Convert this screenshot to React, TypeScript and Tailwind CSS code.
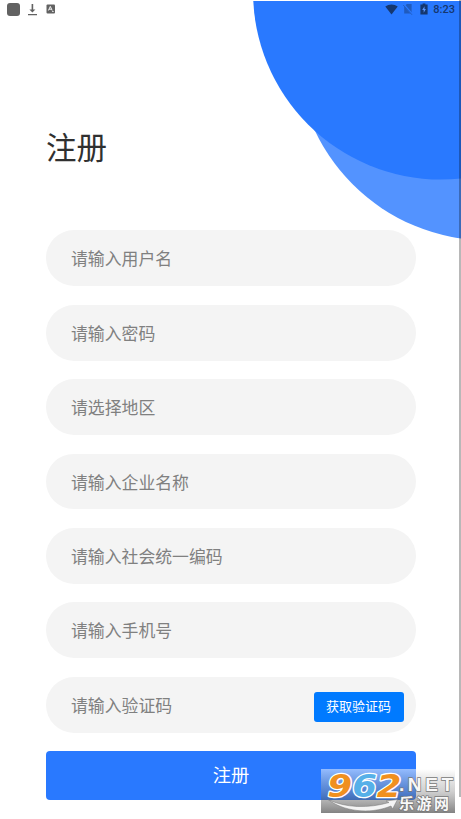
type FieldProps = {
  label: string;
  action?: string;
};

const FIELDS: FieldProps[] = [
  { label: '请输入用户名' },
  { label: '请输入密码' },
  { label: '请选择地区' },
  { label: '请输入企业名称' },
  { label: '请输入社会统一编码' },
  { label: '请输入手机号' },
  { label: '请输入验证码', action: '获取验证码' },
];

const StatusBar = () => (
  <div className="relative flex h-[18px] items-center justify-between pl-[7px] pr-[6px]">
    <div className="flex items-center text-[#626262]">
      <span className="h-[13px] w-[13px] rounded-[3px] bg-[#626262]" />
      <svg className="ml-[7px]" width="11" height="13" viewBox="0 0 11 13" fill="currentColor">
        <path d="M4.6 1h1.6v5.4h2.2L5.4 9.4 2.4 6.4h2.2zM1 11h9v1.3H1z" />
      </svg>
      <svg className="ml-[8px]" width="10" height="10" viewBox="0 0 10 10" fill="none">
        <rect x="0.5" y="0.5" width="8.5" height="9" rx="1" fill="#626262" />
        <path d="M2.4 6.5 4.3 2.4l1.9 4.1M3 5.2h2.6M6.2 7.5h1.4" stroke="#fff" strokeWidth="0.9" />
      </svg>
    </div>
    <div className="flex items-center text-[#15376f]">
      <svg width="13" height="11" viewBox="0 0 13 11" fill="currentColor">
        <path d="M0.3 2.6C3.8-.3 9.2-.3 12.7 2.6L6.5 10.6z" />
      </svg>
      <svg className="ml-[5px] opacity-45" width="10" height="12" viewBox="0 0 10 12">
        <path d="M3.8 1H8.6V10.6H1.2V3.8z" fill="currentColor" />
        <path d="M0.4 1 9.6 11.6" stroke="#2979ff" strokeWidth="1.8" />
        <path d="M0.2 2 9 11.8" stroke="currentColor" strokeWidth="0.9" />
      </svg>
      <svg className="ml-[7px]" width="8" height="12" viewBox="0 0 8 12">
        <path d="M2.6 0.5h2.8v1.1H7.6v9.9H0.4V1.6h2.2z" fill="currentColor" />
        <path d="M4.5 3.2 2.2 7h1.5v2.8L5.9 6H4.5z" fill="#5c97ff" />
      </svg>
      <span className="ml-[5px] pt-px font-['Roboto',sans-serif] text-[11px] font-medium leading-[18px]">
        8:23
      </span>
    </div>
  </div>
);

const Field = ({ label, action }: FieldProps) => (
  <div className="flex h-[55.8px] items-center justify-between rounded-full bg-[#f4f4f4] pl-[25px] pr-[12.5px]">
    <span className="pb-[0.8px] text-[16.85px] leading-[25px] text-[#808080]">{label}</span>
    {action && (
      <button className="mt-[4.6px] h-[30px] w-[90px] rounded-[3px] bg-[#007aff] pb-[2px] text-[13px] text-white">
        {action}
      </button>
    )}
  </div>
);

const Watermark = () => (
  <svg className="absolute left-[321px] top-[769px]" width="134" height="44" viewBox="0 0 134 44">
    <defs>
      <linearGradient id="plate" x1="0" y1="0" x2="0" y2="1">
        <stop offset="0" stopColor="#fff" stopOpacity="0.5" />
        <stop offset="0.5" stopColor="#909090" stopOpacity="0.42" />
        <stop offset="1" stopColor="#101010" stopOpacity="0.52" />
      </linearGradient>
    </defs>
    <rect width="134" height="44" fill="url(#plate)" />
    <path
      d="M7 30.5C24 39 48 39.5 68 33.5l-3-1.5 11.5-1.5-5 9.5-1.5-3C48 46 22 42 7 30.5z"
      fill="#f4f4f4"
      stroke="#777"
      strokeWidth="0.5"
    />
    <g
      fontFamily="DejaVu Sans, sans-serif"
      fontWeight="700"
      fontStyle="italic"
      fontSize="32.5"
      stroke="#fff"
      strokeWidth="2.6"
      paintOrder="stroke"
      strokeLinejoin="round"
    >
      <text x="6.5" y="27.5" textLength="74" lengthAdjust="spacingAndGlyphs">
        <tspan fill="#f0901f">9</tspan>
        <tspan fill="#56b0e8">6</tspan>
        <tspan fill="#f0901f">2</tspan>
      </text>
    </g>
    <g fill="#f8f8f8" stroke="#777" strokeWidth="1.4" paintOrder="stroke" fontWeight="700">
      <text x="78" y="22" fontFamily="Liberation Sans, sans-serif" fontSize="19" textLength="54">.NET</text>
      <text x="78" y="39.5" fontFamily="Noto Sans CJK SC, sans-serif" fontSize="15" textLength="50">乐游网</text>
    </g>
  </svg>
);

export default function App() {
  return (
    <div className="relative h-[819px] w-[461px] overflow-hidden bg-white font-['Noto_Sans_CJK_SC',sans-serif]">
      <svg className="absolute left-0 top-0" width="461" height="250" viewBox="0 0 461 250">
        <circle cx="488" cy="49" r="191.4" fill="#5393ff" />
        <circle cx="441" cy="-8.5" r="188" fill="#2979ff" />
        <rect width="461" height="1" fill="#fff" />
      </svg>
      <StatusBar />
      <main className="relative flex flex-col pl-[46px] pr-[45px]">
        <h1 className="mt-[106px] h-[44px] text-[30.5px] leading-[44px] text-[#303030]">注册</h1>
        <form className="mt-[62.3px] flex flex-col gap-[18.65px]">
          {FIELDS.map(field => (
            <Field key={field.label} {...field} />
          ))}
          <button className="h-[49px] rounded-[4px] bg-[#2979ff] pb-[2px] text-[18.3px] text-white">注册</button>
        </form>
      </main>
      <div className="absolute right-0 top-0 h-[797px] w-[2.5px] bg-black/28" />
      <Watermark />
    </div>
  );
}
